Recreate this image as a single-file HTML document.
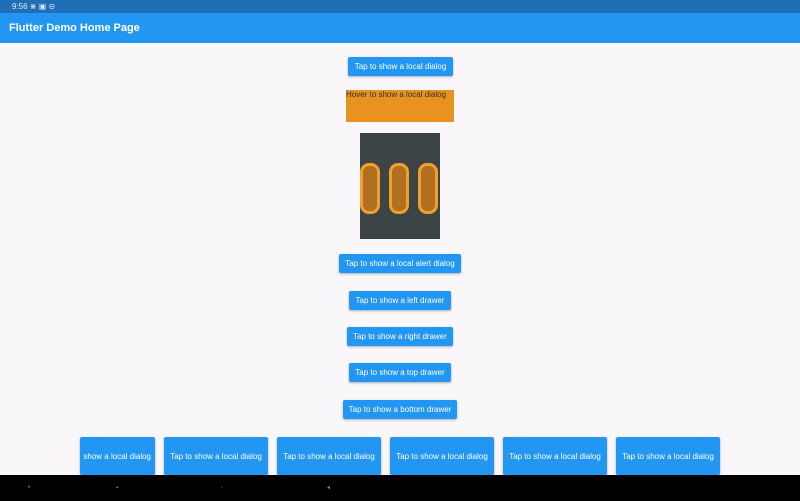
<!DOCTYPE html><html><head><style>
body{margin:0;width:800px;height:501px;background:#f9f7fa;position:relative;overflow:hidden;font-family:"Liberation Sans",sans-serif}
.a{position:absolute}
.b{position:absolute;background:#2196f3;color:#fff;font-size:8px;display:flex;align-items:center;justify-content:center;border-radius:2px;box-shadow:0 1px 2px rgba(0,0,0,.3);white-space:nowrap;overflow:hidden}
.h{position:absolute;top:30px;width:14px;height:45px;border:3px solid #f0a030;border-radius:9px;background:#b07020}
</style></head><body>
<div class="a" style="left:0;top:0;width:800px;height:13px;background:#1f6fb6;color:#dfe9f5;font-size:8px;line-height:13px"><span style="margin-left:12px">9:56 ⋇ ▣ ⊝</span></div>
<div class="a" style="left:0;top:13px;width:800px;height:30px;background:#2196f3;color:#fff;font-size:11px;font-weight:bold;line-height:30px"><span style="margin-left:9px">Flutter Demo Home Page</span></div>
<div class="b" style="left:348px;top:57px;width:105px;height:19px">Tap to show a local dialog</div>
<div class="a" style="left:346px;top:90px;width:108px;height:32px;background:#e8921f;font-size:8px;color:#333">Hover to show a local dialog</div>
<div class="a" style="left:360px;top:133px;width:80px;height:106px;background:#3c4446;overflow:hidden">
<div class="h" style="left:0px"></div>
<div class="h" style="left:29px"></div>
<div class="h" style="left:58px"></div></div>
<div class="b" style="left:339px;top:254px;width:122px;height:19px">Tap to show a local alert dialog</div>
<div class="b" style="left:349px;top:291px;width:102px;height:19px">Tap to show a left drawer</div>
<div class="b" style="left:347px;top:327px;width:106px;height:19px">Tap to show a right drawer</div>
<div class="b" style="left:349px;top:363px;width:102px;height:19px">Tap to show a top drawer</div>
<div class="b" style="left:343px;top:400px;width:114px;height:19px">Tap to show a bottom drawer</div>
<div class="b" style="left:80px;top:437px;width:75px;height:38px;justify-content:flex-end;padding-right:4px;box-sizing:border-box">show a local dialog</div>
<div class="b" style="left:164px;top:437px;width:104px;height:38px">Tap to show a local dialog</div>
<div class="b" style="left:277px;top:437px;width:104px;height:38px">Tap to show a local dialog</div>
<div class="b" style="left:390px;top:437px;width:104px;height:38px">Tap to show a local dialog</div>
<div class="b" style="left:503px;top:437px;width:104px;height:38px">Tap to show a local dialog</div>
<div class="b" style="left:616px;top:437px;width:104px;height:38px">Tap to show a local dialog</div>
<div class="a" style="left:0;top:475px;width:800px;height:26px;background:#000;color:#889;font-size:6px;line-height:26px">
<span class="a" style="left:28px">•</span><span class="a" style="left:116px">▪</span><span class="a" style="left:221px">◦</span><span class="a" style="left:327px">◂</span></div>
</body></html>
